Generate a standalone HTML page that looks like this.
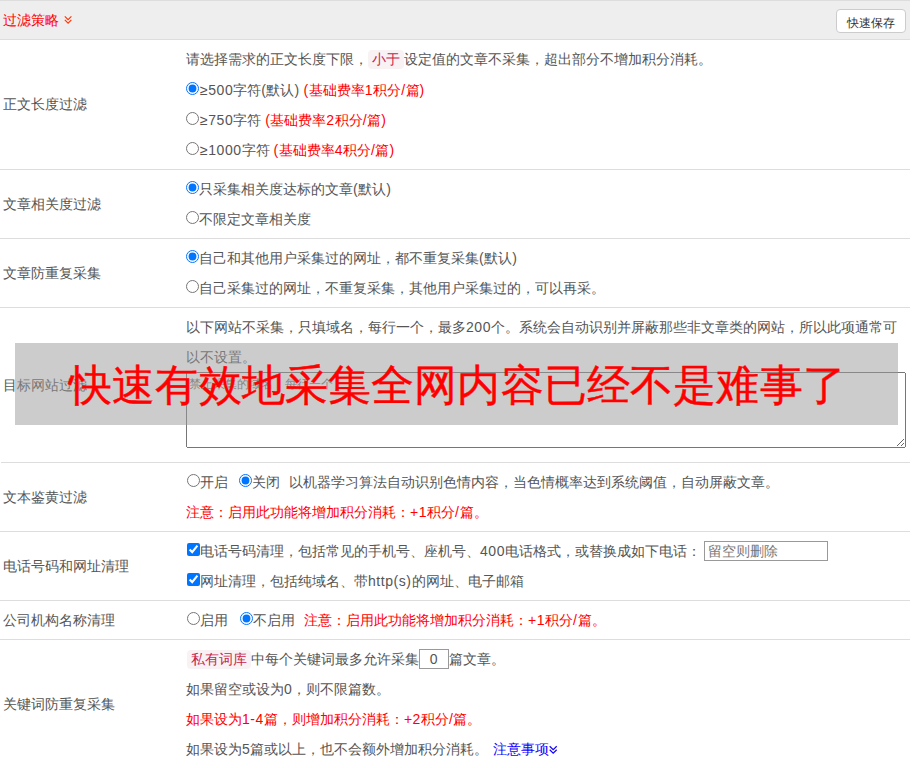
<!DOCTYPE html>
<html><head><meta charset="utf-8">
<style>
html,body{margin:0;padding:0;background:#fff;width:912px;height:768px;overflow:hidden;}
body{font-family:"Liberation Sans",sans-serif;font-size:14px;color:#555;position:relative;}
.hl{position:absolute;left:0;width:910px;height:1px;background:#ddd;}
.ln{position:absolute;left:186px;height:30px;line-height:30px;white-space:nowrap;}
.lb{position:absolute;left:3px;height:30px;line-height:30px;white-space:nowrap;}
.red{color:#f00;}
code{font-family:"Liberation Sans",sans-serif;font-size:14px;color:#c7254e;background:#f9f2f4;border-radius:4px;padding:0 4px;display:inline-block;height:19px;position:relative;top:-1px;line-height:19px;vertical-align:middle;}
input[type=radio],input[type=checkbox]{margin:0;width:13px;height:13px;vertical-align:middle;position:relative;top:-1px;}
.sp{display:inline-block;}
i{font-style:normal;letter-spacing:0.55px;}
</style></head><body>
<!-- header -->
<div style="position:absolute;left:0;top:0;width:910px;height:39px;background:#eee;"></div>
<div class="hl" style="top:0"></div>
<div class="hl" style="top:39px"></div>
<div class="lb red" style="top:5px;">过滤策略</div>
<svg style="position:absolute;left:64px;top:15px" width="9" height="10" viewBox="0 0 9 10"><path d="M0.8 1.3 L4.1 4.6 L7.4 1.3 M0.8 4.9 L4.1 8.2 L7.4 4.9" fill="none" stroke="#f30" stroke-width="1.1"/></svg>
<div style="position:absolute;left:836px;top:9px;width:68px;height:22px;border:1px solid #ccc;border-radius:4px;background:#fff;"></div><div style="position:absolute;left:836px;top:12px;width:70px;height:22px;font-size:12px;line-height:22px;text-align:center;color:#333;">快速保存</div>

<!-- row1 -->
<div class="lb" style="top:89px">正文长度过滤</div>
<div class="ln" style="top:44px">请选择需求的正文长度下限，<code>小于</code>设定值的文章不采集，超出部分不增加积分消耗。</div>
<div class="ln" style="top:75px"><input type="radio" checked style="top:-3px"><i style="margin-left:1px">≥500</i>字符<i>(</i>默认<i>)</i> <span class="red"><i>(</i>基础费率<i>1</i>积分<i>/</i>篇<i>)</i></span></div>
<div class="ln" style="top:105px"><input type="radio" style="top:-3px"><i style="margin-left:1px">≥750</i>字符 <span class="red"><i>(</i>基础费率<i>2</i>积分<i>/</i>篇<i>)</i></span></div>
<div class="ln" style="top:135px"><input type="radio" style="top:-3px"><i style="margin-left:1px">≥1000</i>字符 <span class="red"><i>(</i>基础费率<i>4</i>积分<i>/</i>篇<i>)</i></span></div>
<div class="hl" style="top:169px"></div>

<!-- row2 -->
<div class="lb" style="top:189px">文章相关度过滤</div>
<div class="ln" style="top:174px"><input type="radio" checked style="top:-3px">只采集相关度达标的文章<i>(</i>默认<i>)</i></div>
<div class="ln" style="top:204px"><input type="radio" style="top:-3px">不限定文章相关度</div>
<div class="hl" style="top:238px"></div>

<!-- row3 -->
<div class="lb" style="top:258px">文章防重复采集</div>
<div class="ln" style="top:243px"><input type="radio" checked style="top:-3px">自己和其他用户采集过的网址，都不重复采集<i>(</i>默认<i>)</i></div>
<div class="ln" style="top:273px"><input type="radio" style="top:-3px">自己采集过的网址，不重复采集，其他用户采集过的，可以再采。</div>
<div class="hl" style="top:307px"></div>

<!-- row4 -->
<div class="lb" style="top:370px">目标网站过滤</div>
<div class="ln" style="top:312px">以下网站不采集，只填域名，每行一个，最多<i>200</i>个。系统会自动识别并屏蔽那些非文章类的网站，所以此项通常可</div>
<div class="ln" style="top:342px">以不设置。</div>
<textarea placeholder="禁止采集的域名，每行一个" style="position:absolute;left:186px;top:372px;width:720px;height:76px;box-sizing:border-box;margin:0;padding:2px 2px;font-family:'Liberation Sans',sans-serif;font-size:12px;line-height:18px;"></textarea>
<div class="hl" style="top:462px;left:1px;width:909px"></div>

<!-- row5 -->
<div class="lb" style="top:482px">文本鉴黄过滤</div>
<div class="ln" style="top:467px"><input type="radio" style="top:-3px;margin-left:1px">开启<span class="sp" style="width:11px"></span><input type="radio" checked style="top:-3px">关闭<span class="sp" style="width:9px"></span>以机器学习算法自动识别色情内容，当色情概率达到系统阈值，自动屏蔽文章。</div>
<div class="ln red" style="top:497px">注意：启用此功能将增加积分消耗：<i>+1</i>积分<i>/</i>篇。</div>
<div class="hl" style="top:531px"></div>

<!-- row6 -->
<div class="lb" style="top:551px">电话号码和网址清理</div>
<div class="ln" style="top:536px"><input type="checkbox" checked style="top:-3px;margin-left:1px">电话号码清理，包括常见的手机号、座机号、<i>400</i>电话格式，或替换成如下电话：</div>
<div style="position:absolute;left:704px;top:541px;width:122px;height:18px;border:1px solid #999;background:#fff;"></div>
<div style="position:absolute;left:708px;top:541px;height:20px;line-height:20px;color:#777;white-space:nowrap;">留空则删除</div>
<div class="ln" style="top:566px"><input type="checkbox" checked style="top:-3px;margin-left:1px">网址清理，包括纯域名、带<i>http(s)</i>的网址、电子邮箱</div>
<div class="hl" style="top:600px"></div>

<!-- row7 -->
<div class="lb" style="top:605px">公司机构名称清理</div>
<div class="ln" style="top:605px"><input type="radio" style="top:-3px;margin-left:1px">启用<span class="sp" style="width:12px"></span><input type="radio" checked style="top:-3px">不启用<span class="sp" style="width:9px"></span><span class="red">注意：启用此功能将增加积分消耗：<i>+1</i>积分<i>/</i>篇。</span></div>
<div class="hl" style="top:639px"></div>

<!-- row8 -->
<div class="lb" style="top:689px">关键词防重复采集</div>
<div class="ln" style="top:644px"><code style="margin-left:1px">私有词库</code>中每个关键词最多允许采集<span style="display:inline-block;width:28px;height:18px;border:1px solid #999;vertical-align:middle;text-align:center;line-height:18px;position:relative;top:-1px;"><i>0</i></span>篇文章。</div>
<div class="ln" style="top:674px">如果留空或设为<i>0</i>，则不限篇数。</div>
<div class="ln red" style="top:704px">如果设为<i>1-4</i>篇，则增加积分消耗：<i>+2</i>积分<i>/</i>篇。</div>
<div class="ln" style="top:734px">如果设为<i>5</i>篇或以上，也不会额外增加积分消耗。<span class="sp" style="width:5px"></span><span style="color:#10f">注意事项</span><svg style="vertical-align:middle" width="9" height="10" viewBox="0 0 9 10"><path d="M0.7 1.2 L4.2 4.6 L7.7 1.2 M0.7 4.8 L4.2 8.2 L7.7 4.8" fill="none" stroke="#10f" stroke-width="1.2"/></svg></div>

<!-- overlay -->
<div style="position:absolute;left:15px;top:343px;width:883px;height:82px;background:rgba(153,153,153,0.5);"></div>
<div style="position:absolute;left:16px;top:344px;width:883px;height:82px;line-height:82px;text-align:center;color:#f00;font-size:43px;letter-spacing:0.15px;-webkit-text-stroke:0.4px #f00;white-space:nowrap;">快速有效地采集全网内容已经不是难事了</div>
</body></html>
